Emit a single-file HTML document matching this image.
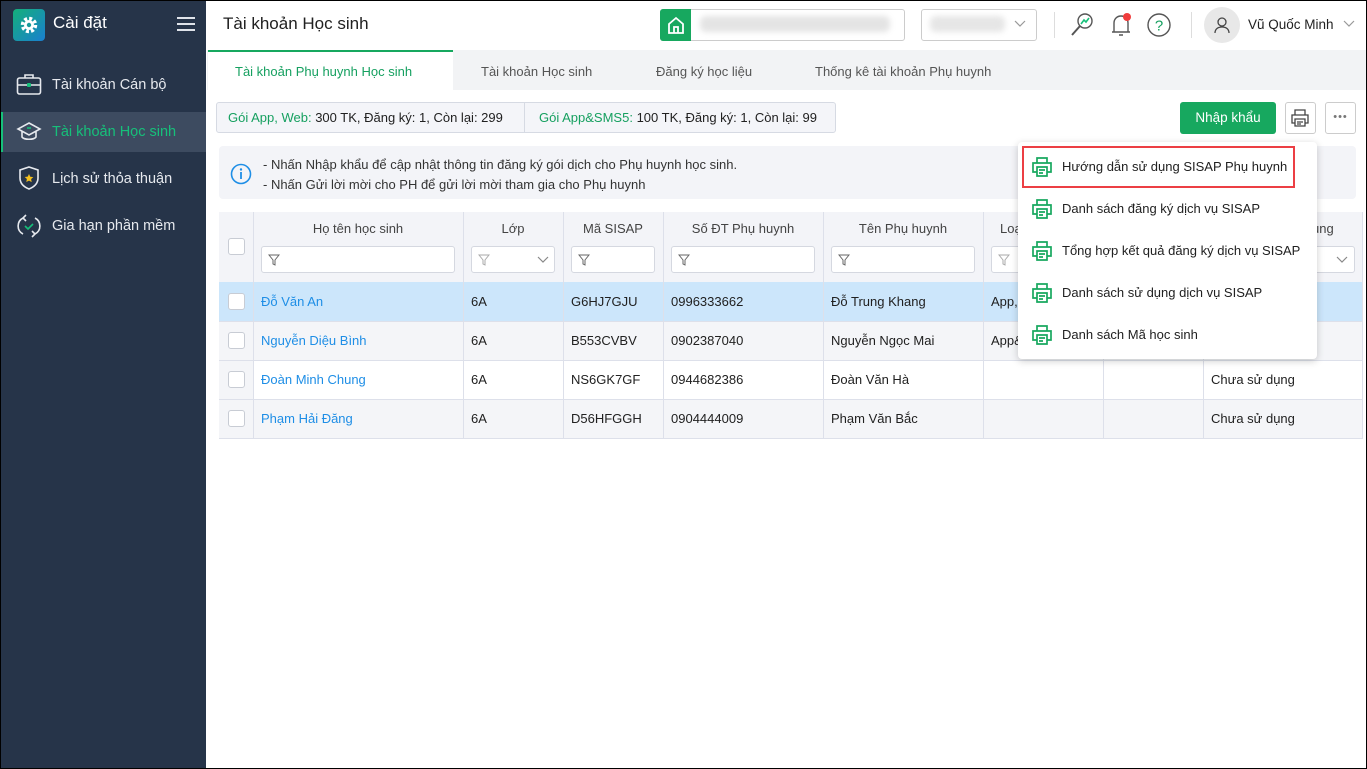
<!DOCTYPE html>
<html><head><meta charset="utf-8"><style>
*{box-sizing:border-box;margin:0;padding:0}
body{width:1367px;height:769px;overflow:hidden;font-family:"Liberation Sans",sans-serif;font-size:13px;color:#212121;background:#fff;position:relative}
.a{position:absolute}
.side{left:0;top:0;width:206px;height:769px;background:#263449}
.si{left:0;width:206px;height:40px;color:#e6e9ee;font-size:14.5px;line-height:40px;padding-left:52px}
.cell{position:absolute;line-height:39px;padding-left:8px;white-space:nowrap;overflow:hidden}
.vl{position:absolute;top:212px;width:1px;height:226px;background:#dde0ea}
.hl{position:absolute;left:219px;width:1144px;height:1px;background:#dde0ea}
.fi{position:absolute;top:246px;height:27px;border:1px solid #d5d8e0;border-radius:3px;background:#fff}
.cb{position:absolute;left:228px;width:17px;height:17px;border:1px solid #c8ccd4;border-radius:3px;background:#fff}
.mi{position:absolute;left:1030px;height:42px;line-height:42px;padding-left:32px;font-size:13px;color:#212121}
</style></head><body>
<div class="a side"></div>
<div class="a" style="left:13px;top:9px;width:32px;height:32px;border-radius:4px;background:linear-gradient(135deg,#14b07a,#1a7fd0)"></div>
<svg class="a" style="left:19px;top:15px" width="20" height="20" viewBox="0 0 20 20"><circle cx="10" cy="10" r="6.5" fill="none" stroke="#fff" stroke-width="3.5" stroke-dasharray="3 2.1"/><circle cx="10" cy="10" r="5" fill="#fff"/><circle cx="10" cy="10" r="2.2" fill="#1a9a9a"/></svg>
<div class="a" style="left:53px;top:13px;color:#fff;font-size:17px">Cài đặt</div>
<div class="a" style="left:177px;top:17px;width:18px;height:2px;background:#dfe3ea;box-shadow:0 6px 0 #dfe3ea,0 12px 0 #dfe3ea"></div>
<div class="a si" style="top:65px">Tài khoản Cán bộ</div>
<svg class="a" style="left:16px;top:73px" width="26" height="24" viewBox="0 0 26 24"><rect x="1.5" y="5" width="23" height="16" rx="2" fill="none" stroke="#e6e9ee" stroke-width="1.6"/><path d="M9 5V2h8v3M1.5 12h23" fill="none" stroke="#e6e9ee" stroke-width="1.6"/><rect x="11" y="10" width="4" height="4" rx="1" fill="#16c07a"/></svg>
<div class="a" style="left:0;top:112px;width:206px;height:40px;background:#3d4b60"></div>
<div class="a" style="left:0;top:112px;width:3px;height:40px;background:#16c07a"></div>
<div class="a si" style="top:112px;color:#16c07a">Tài khoản Học sinh</div>
<svg class="a" style="left:16px;top:121px" width="26" height="22" viewBox="0 0 26 22"><path d="M13 2L24 8 13 14 2 8Z M6 10v6c2 3 12 3 14 0v-6" fill="none" stroke="#e6e9ee" stroke-width="1.6"/><path d="M11 7h4" stroke="#16c07a" stroke-width="1.6"/></svg>
<div class="a si" style="top:159px">Lịch sử thỏa thuận</div>
<svg class="a" style="left:18px;top:165px" width="22" height="26" viewBox="0 0 22 26"><path d="M11 2l9 3v8c0 6-4 9-9 11C6 22 2 19 2 13V5Z" fill="none" stroke="#e6e9ee" stroke-width="1.6"/><path d="M11 9l1.3 2.7 3 .4-2.2 2 .6 3L11 15.6 8.3 17l.6-3-2.2-2 3-.4Z" fill="#f4c01e"/></svg>
<div class="a si" style="top:206px">Gia hạn phần mềm</div>
<svg class="a" style="left:17px;top:213px" width="24" height="26" viewBox="0 0 24 26"><path d="M6 5A9 9 0 0 0 6 21M18 5A9 9 0 0 1 18 21M9 2l-3 3 3 3M15 24l3-3-3-3" fill="none" stroke="#e6e9ee" stroke-width="1.6"/><path d="M8 13l3 3 5-5" fill="none" stroke="#16c07a" stroke-width="1.6"/></svg>

<div class="a" style="left:223px;top:14px;font-size:17px">Tài khoản Học sinh</div>
<div class="a" style="left:660px;top:9px;width:245px;height:32px;border:1px solid #ccc;border-radius:3px"></div>
<div class="a" style="left:660px;top:9px;width:31px;height:32px;background:#17a85f;border-radius:3px 0 0 3px"></div>
<svg class="a" style="left:666px;top:15px" width="20" height="20" viewBox="0 0 20 20"><path d="M3 9L10 3l7 6v9H3Z M8 18v-6h4v6" fill="none" stroke="#fff" stroke-width="1.8"/></svg>
<div class="a" style="left:700px;top:16px;width:190px;height:16px;background:#e4e4e4;border-radius:6px;filter:blur(3px)"></div>
<div class="a" style="left:921px;top:9px;width:116px;height:32px;border:1px solid #ccc;border-radius:3px"></div>
<div class="a" style="left:930px;top:16px;width:75px;height:16px;background:#e6e6e6;border-radius:6px;filter:blur(3px)"></div>
<svg class="a" style="left:1014px;top:20px" width="12" height="8"><path d="M1 1l5 5 5-5" fill="none" stroke="#999" stroke-width="1.2"/></svg>
<div class="a" style="left:1054px;top:12px;width:1px;height:26px;background:#ddd"></div>
<svg class="a" style="left:1068px;top:11px" width="28" height="28" viewBox="0 0 28 28"><circle cx="17" cy="10" r="7" fill="none" stroke="#555" stroke-width="1.4"/><path d="M12 15l-8 9" stroke="#555" stroke-width="2"/><path d="M13 13l3-4 2 2 3-4" fill="none" stroke="#16c07a" stroke-width="1.6"/></svg>
<svg class="a" style="left:1108px;top:10px" width="26" height="30" viewBox="0 0 26 30"><path d="M6 22V13c0-4 3-7 7-7s7 3 7 7v9H4h18M11 25h4" fill="none" stroke="#555" stroke-width="1.4"/><circle cx="19" cy="7" r="4" fill="#f03c3c"/></svg>
<svg class="a" style="left:1146px;top:12px" width="26" height="26" viewBox="0 0 26 26"><circle cx="13" cy="13" r="11" fill="none" stroke="#555" stroke-width="1.4"/><text x="13" y="18.5" font-size="15" text-anchor="middle" fill="#16a060" font-family="Liberation Sans">?</text></svg>
<div class="a" style="left:1191px;top:12px;width:1px;height:26px;background:#ddd"></div>
<div class="a" style="left:1204px;top:7px;width:36px;height:36px;border-radius:50%;background:#e8e8e8"></div>
<svg class="a" style="left:1212px;top:15px" width="20" height="20" viewBox="0 0 20 20"><circle cx="10" cy="7" r="4" fill="none" stroke="#444" stroke-width="1.3"/><path d="M3 18c0-4 3-6 7-6s7 2 7 6" fill="none" stroke="#444" stroke-width="1.3"/></svg>
<div class="a" style="left:1248px;top:17px;font-size:13.5px">Vũ Quốc Minh</div>
<svg class="a" style="left:1343px;top:20px" width="12" height="8"><path d="M1 1l5 5 5-5" fill="none" stroke="#999" stroke-width="1.2"/></svg>

<div class="a" style="left:207px;top:50px;width:1160px;height:40px;background:#f2f3f5"></div>
<div class="a" style="left:208px;top:50px;width:245px;height:40px;background:#fff;border-top:2px solid #16a85f"></div>
<div class="a" style="left:235px;top:64px;color:#16a060">Tài khoản Phụ huynh Học sinh</div>
<div class="a" style="left:481px;top:64px;color:#555">Tài khoản Học sinh</div>
<div class="a" style="left:656px;top:64px;color:#555">Đăng ký học liệu</div>
<div class="a" style="left:815px;top:64px;color:#555">Thống kê tài khoản Phụ huynh</div>

<div class="a" style="left:216px;top:102px;width:620px;height:31px;border:1px solid #d6dae3;border-radius:3px;background:#f4f5f9"></div>
<div class="a" style="left:524px;top:103px;width:1px;height:29px;background:#d6dae3"></div>
<div class="a" style="left:228px;top:110px"><span style="color:#16a060">Gói App, Web:</span> 300 TK, Đăng ký: 1, Còn lại: 299</div>
<div class="a" style="left:539px;top:110px"><span style="color:#16a060">Gói App&amp;SMS5:</span> 100 TK, Đăng ký: 1, Còn lại: 99</div>
<div class="a" style="left:1180px;top:102px;width:96px;height:32px;background:#17a85f;border-radius:3px;color:#fff;font-size:13.5px;line-height:32px;text-align:center">Nhập khẩu</div>
<div class="a" style="left:1285px;top:102px;width:31px;height:32px;border:1px solid #ccc;border-radius:3px"></div>
<svg class="a" style="left:1290px;top:108px" width="20" height="20" viewBox="0 0 20 20"><path d="M5 7V2h10v5M5 15H2V7h16v8h-3M5 11h10v7H5Z M7 14h6M7 16h4" fill="none" stroke="#444" stroke-width="1.3"/></svg>
<div class="a" style="left:1325px;top:102px;width:31px;height:32px;border:1px solid #ccc;border-radius:3px;text-align:center;line-height:28px;color:#777;font-size:11px;letter-spacing:1px">•••</div>

<div class="a" style="left:219px;top:146px;width:1137px;height:53px;background:#f3f4f8;border-radius:4px"></div>
<svg class="a" style="left:230px;top:163px" width="22" height="22" viewBox="0 0 22 22"><circle cx="11" cy="11" r="9.5" fill="none" stroke="#1e8ee6" stroke-width="1.6"/><circle cx="11" cy="6.5" r="1.2" fill="#1e8ee6"/><path d="M11 9v7" stroke="#1e8ee6" stroke-width="1.8"/></svg>
<div class="a" style="left:263px;top:155px;line-height:20px;color:#333">- Nhấn Nhập khẩu để cập nhật thông tin đăng ký gói dịch cho Phụ huynh học sinh.<br>- Nhấn Gửi lời mời cho PH để gửi lời mời tham gia cho Phụ huynh</div>

<div class="a" style="left:219px;top:212px;width:1144px;height:70px;background:#f3f4f8"></div>
<div class="a" style="left:219px;top:282px;width:1144px;height:39px;background:#cce6fb"></div>
<div class="a" style="left:219px;top:321px;width:1144px;height:39px;background:#f4f5f8"></div>
<div class="a" style="left:219px;top:399px;width:1144px;height:39px;background:#f4f5f8"></div>
<div class="a" style="left:219px;top:360px;width:34px;height:39px;background:#f4f5f8"></div>
<div class="hl" style="top:321px"></div><div class="hl" style="top:360px"></div><div class="hl" style="top:399px"></div><div class="hl" style="top:438px"></div>
<div class="vl" style="left:253px"></div><div class="vl" style="left:463px"></div><div class="vl" style="left:563px"></div><div class="vl" style="left:663px"></div><div class="vl" style="left:823px"></div><div class="vl" style="left:983px"></div><div class="vl" style="left:1103px"></div><div class="vl" style="left:1203px"></div><div class="vl" style="left:1362px"></div>
<div class="a" style="left:253px;top:221px;width:210px;text-align:center;color:#444">Họ tên học sinh</div>
<div class="a" style="left:463px;top:221px;width:100px;text-align:center;color:#444">Lớp</div>
<div class="a" style="left:563px;top:221px;width:100px;text-align:center;color:#444">Mã SISAP</div>
<div class="a" style="left:663px;top:221px;width:160px;text-align:center;color:#444">Số ĐT Phụ huynh</div>
<div class="a" style="left:823px;top:221px;width:160px;text-align:center;color:#444">Tên Phụ huynh</div>
<div class="a" style="left:1000px;top:221px;color:#444">Loại</div>
<div class="a" style="left:1312px;top:221px;color:#444">ụng</div>
<div class="fi" style="left:261px;width:194px"></div><div class="fi" style="left:471px;width:84px"></div><div class="fi" style="left:571px;width:84px"></div><div class="fi" style="left:671px;width:144px"></div><div class="fi" style="left:831px;width:144px"></div><div class="fi" style="left:991px;width:104px"></div><div class="fi" style="left:1211px;width:144px"></div>
<svg class="a" style="left:268px;top:254px" width="12" height="12"><path d="M1 1h10L7 6v5L5 10V6Z" fill="none" stroke="#666"/></svg>
<svg class="a" style="left:478px;top:254px" width="12" height="12"><path d="M1 1h10L7 6v5L5 10V6Z" fill="none" stroke="#aaa"/></svg>
<svg class="a" style="left:537px;top:256px" width="12" height="8"><path d="M1 1l5 5 5-5" fill="none" stroke="#888" stroke-width="1.2"/></svg>
<svg class="a" style="left:578px;top:254px" width="12" height="12"><path d="M1 1h10L7 6v5L5 10V6Z" fill="none" stroke="#666"/></svg>
<svg class="a" style="left:678px;top:254px" width="12" height="12"><path d="M1 1h10L7 6v5L5 10V6Z" fill="none" stroke="#666"/></svg>
<svg class="a" style="left:838px;top:254px" width="12" height="12"><path d="M1 1h10L7 6v5L5 10V6Z" fill="none" stroke="#666"/></svg>
<svg class="a" style="left:998px;top:254px" width="12" height="12"><path d="M1 1h10L7 6v5L5 10V6Z" fill="none" stroke="#aaa"/></svg>
<svg class="a" style="left:1336px;top:256px" width="12" height="8"><path d="M1 1l5 5 5-5" fill="none" stroke="#888" stroke-width="1.2"/></svg>
<div class="cb" style="top:238px"></div><div class="cb" style="top:293px"></div><div class="cb" style="top:332px"></div><div class="cb" style="top:371px"></div><div class="cb" style="top:410px"></div>

<div class="cell" style="left:253px;top:282px;color:#1e8ee6">Đỗ Văn An</div><div class="cell" style="left:463px;top:282px">6A</div><div class="cell" style="left:563px;top:282px">G6HJ7GJU</div><div class="cell" style="left:663px;top:282px">0996333662</div><div class="cell" style="left:823px;top:282px">Đỗ Trung Khang</div><div class="cell" style="left:983px;top:282px">App,</div>
<div class="cell" style="left:253px;top:321px;color:#1e8ee6">Nguyễn Diệu Bình</div><div class="cell" style="left:463px;top:321px">6A</div><div class="cell" style="left:563px;top:321px">B553CVBV</div><div class="cell" style="left:663px;top:321px">0902387040</div><div class="cell" style="left:823px;top:321px">Nguyễn Ngọc Mai</div><div class="cell" style="left:983px;top:321px">App&amp;</div>
<div class="cell" style="left:253px;top:360px;color:#1e8ee6">Đoàn Minh Chung</div><div class="cell" style="left:463px;top:360px">6A</div><div class="cell" style="left:563px;top:360px">NS6GK7GF</div><div class="cell" style="left:663px;top:360px">0944682386</div><div class="cell" style="left:823px;top:360px">Đoàn Văn Hà</div><div class="cell" style="left:1203px;top:360px">Chưa sử dụng</div>
<div class="cell" style="left:253px;top:399px;color:#1e8ee6">Phạm Hải Đăng</div><div class="cell" style="left:463px;top:399px">6A</div><div class="cell" style="left:563px;top:399px">D56HFGGH</div><div class="cell" style="left:663px;top:399px">0904444009</div><div class="cell" style="left:823px;top:399px">Phạm Văn Bắc</div><div class="cell" style="left:1203px;top:399px">Chưa sử dụng</div>

<div class="a" style="left:1018px;top:142px;width:299px;height:217px;background:#fff;border-radius:4px;box-shadow:0 2px 8px rgba(0,0,0,.2)"></div>
<div class="a" style="left:1022px;top:146px;width:273px;height:42px;border:2px solid #ec3f44"></div>
<div class="mi" style="top:146px">Hướng dẫn sử dụng SISAP Phụ huynh</div>
<div class="mi" style="top:188px">Danh sách đăng ký dịch vụ SISAP</div>
<div class="mi" style="top:230px">Tổng hợp kết quả đăng ký dịch vụ SISAP</div>
<div class="mi" style="top:272px">Danh sách sử dụng dịch vụ SISAP</div>
<div class="mi" style="top:314px">Danh sách Mã học sinh</div>
<svg class="a" style="left:1031px;top:156px" width="22" height="22" viewBox="0 0 22 22"><path d="M6 7V2h10v5M6 16H2V7h18v9h-4M6 11h10v9H6Z M8 14h6M8 17h4" fill="none" stroke="#17a85f" stroke-width="1.7"/></svg>
<svg class="a" style="left:1031px;top:198px" width="22" height="22" viewBox="0 0 22 22"><path d="M6 7V2h10v5M6 16H2V7h18v9h-4M6 11h10v9H6Z M8 14h6M8 17h4" fill="none" stroke="#17a85f" stroke-width="1.7"/></svg>
<svg class="a" style="left:1031px;top:240px" width="22" height="22" viewBox="0 0 22 22"><path d="M6 7V2h10v5M6 16H2V7h18v9h-4M6 11h10v9H6Z M8 14h6M8 17h4" fill="none" stroke="#17a85f" stroke-width="1.7"/></svg>
<svg class="a" style="left:1031px;top:282px" width="22" height="22" viewBox="0 0 22 22"><path d="M6 7V2h10v5M6 16H2V7h18v9h-4M6 11h10v9H6Z M8 14h6M8 17h4" fill="none" stroke="#17a85f" stroke-width="1.7"/></svg>
<svg class="a" style="left:1031px;top:324px" width="22" height="22" viewBox="0 0 22 22"><path d="M6 7V2h10v5M6 16H2V7h18v9h-4M6 11h10v9H6Z M8 14h6M8 17h4" fill="none" stroke="#17a85f" stroke-width="1.7"/></svg>
<div class="a" style="left:0;top:0;width:1367px;height:769px;border:1px solid #000;pointer-events:none"></div>
</body></html>
